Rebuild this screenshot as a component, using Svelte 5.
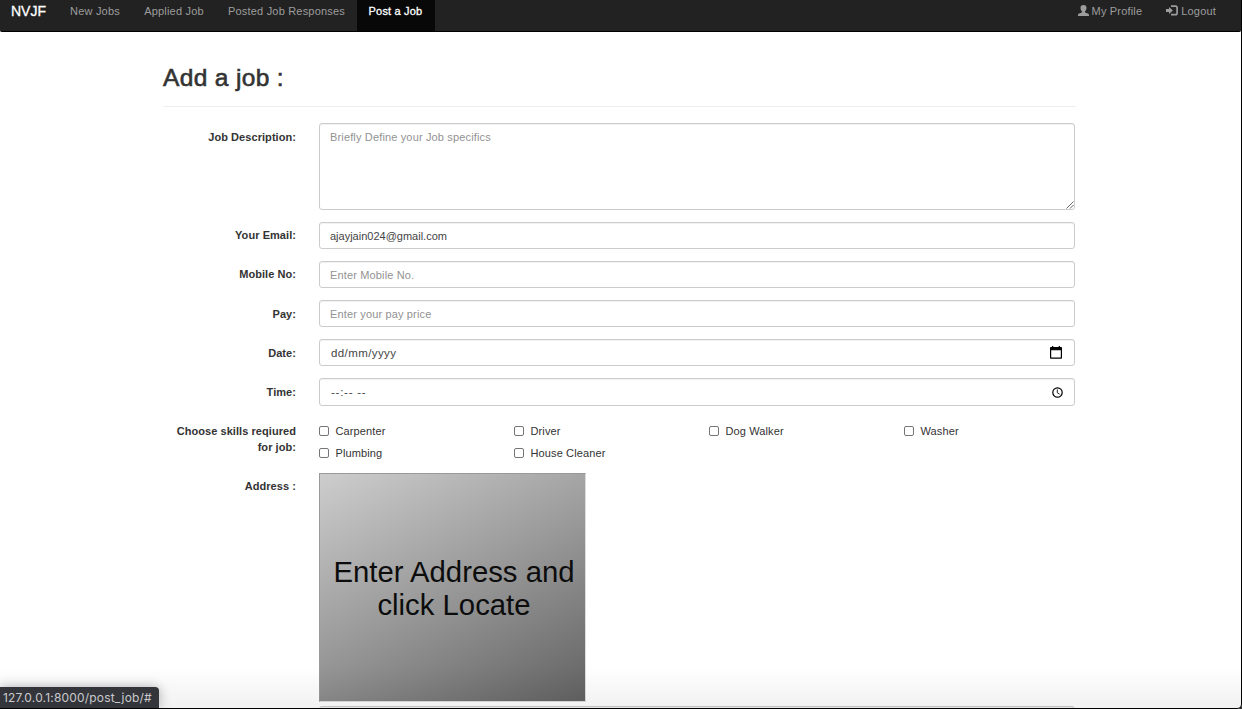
<script>
  const links = [
    { text: 'New Jobs', width: 74 },
    { text: 'Applied Job', width: 84 },
    { text: 'Posted Job Responses', width: 141 },
    { text: 'Post a Job', width: 78, active: true }
  ];
  const skills = ['Carpenter', 'Driver', 'Dog Walker', 'Washer', 'Plumbing', 'House Cleaner'];
</script>

<div class="screen">
  <nav>
    <a class="brand" href="#top">NVJF</a>
    {#each links as link}
      <a class="link" class:active={link.active} href="#top" style="width: {link.width}px">{link.text}</a>
    {/each}
    <div class="right">
      <a class="profile" href="#top">
        <svg width="11" height="11" viewBox="0 0 11 11"><path fill="currentColor" d="M5.500 0C3.400 0 2.400 1.100 2.500 2.900c.1 1.600.6 2.700 1.500 3.400v.8c0 .4-.3.500-.7.700L1.200 8.600C.3 9 0 9.400 0 10.200V11h11v-.8c0-.8-.3-1.200-1.200-1.600L7.700 7.800c-.4-.2-.7-.3-.7-.7v-.8c.9-.7 1.400-1.800 1.500-3.400C8.600 1.100 7.600 0 5.500 0z" /></svg>
        <span>My Profile</span>
      </a>
      <a class="logout" href="#top">
        <svg width="12" height="11" viewBox="0 0 12 11"><path fill="currentColor" d="M0 4h3V1.900L6.900 5.500 3 9.100V7H0z" /><path fill="none" stroke="currentColor" stroke-width="1.700" d="M5 1.100h4.400q1.700 0 1.700 1.700v5.200q0 1.700-1.700 1.700H5" /></svg>
        <span>Logout</span>
      </a>
    </div>
  </nav>

  <main>
    <h2>Add a job :</h2>
    <form>
      <div class="row tall">
        <label for="desc">Job Description:</label>
        <div class="area">
          <textarea id="desc" placeholder="Briefly Define your Job specifics"></textarea>
          <svg class="grip" width="8" height="8" viewBox="0 0 8 8"><path d="M.5 7.500l7-7M4 7.500L7.500 4" stroke="#555" stroke-width=".9" /></svg>
        </div>
      </div>
      <div class="row">
        <label for="email">Your Email:</label>
        <input class="control" id="email" type="text" value="ajayjain024@gmail.com" />
      </div>
      <div class="row">
        <label for="mobile">Mobile No:</label>
        <input class="control" id="mobile" type="text" placeholder="Enter Mobile No." />
      </div>
      <div class="row low">
        <label for="pay">Pay:</label>
        <input class="control" id="pay" type="text" placeholder="Enter your pay price" />
      </div>
      <div class="row low">
        <span class="label">Date:</span>
        <div class="control picker">
          <span class="date">dd/mm/yyyy</span>
          <svg width="12" height="13" viewBox="0 0 12 13"><path fill="#000" fill-rule="evenodd" d="M2 0h1.300v1h5.400V0H10v1h1.200q.8 0 .8.800V12q0 .8-.8.800H.8Q0 12.800 0 12V1.800Q0 1 .8 1H2zM1.200 4.200v7.400h9.600V4.200z" /></svg>
        </div>
      </div>
      <div class="row low time-row">
        <span class="label">Time:</span>
        <div class="control picker">
          <span class="time">--:-- --</span>
          <svg width="11" height="11" viewBox="0 0 11 11" fill="none" stroke="#000"><circle cx="5.500" cy="5.500" r="4.700" stroke-width="1.200" /><path d="M5.300 2.500v3.200l2.300 1.500" stroke-width=".9" /></svg>
        </div>
      </div>
      <div class="row low skills-row">
        <span class="label">Choose skills reqiured<br />for job:</span>
        <div class="skills">
          {#each skills as skill}
            <label class="skill"><input type="checkbox" />{skill}</label>
          {/each}
        </div>
      </div>
      <div class="row address-row">
        <span class="label">Address :</span>
        <div class="address">
          <div class="map"><span>Enter Address and</span><span>click Locate</span></div>
          <input class="control next" type="text" aria-label="Address" />
        </div>
      </div>
    </form>
  </main>

  <div class="fade"></div>
  <div class="status">127.0.0.1:8000/post_job/#</div>
  <div class="frame"></div>
</div>

<style>
  :global(body) { margin: 0; background: #000; overflow: hidden; }
  * { box-sizing: border-box; }
  .screen {
    position: relative;
    width: 1242px;
    height: 709px;
    overflow: hidden;
    background: #fff;
    color: #333;
    font: 11px/16px "Liberation Sans", Arial, sans-serif;
  }
  nav {
    display: flex;
    width: 1241px;
    height: 32px;
    background: #222;
    border-bottom: 1px solid #000;
    border-radius: 0 0 2px 2px;
  }
  nav a { color: #9d9d9d; text-decoration: none; line-height: 16px; padding-top: 3px; white-space: nowrap; }
  .brand { width: 58px; padding-left: 11px; color: #fff; font-size: 14px; -webkit-text-stroke: .3px #fff; }
  .link { text-align: center; letter-spacing: .19px; }
  .link.active { background: #080808; color: #fff; padding-right: 1px; -webkit-text-stroke: .3px #fff; }
  .right { display: flex; margin-left: auto; padding-right: 25px; gap: 24px; letter-spacing: .18px; }
  .right a { display: flex; }
  .right svg { margin-top: 2px; }
  .profile { gap: 3px; }
  .logout { gap: 3px; }
  main { width: 913px; margin-left: 163px; }
  h2 {
    margin: 0 0 16px;
    height: 75px;
    padding-top: 31px;
    border-bottom: 1px solid #eee;
    font-size: 24.500px;
    line-height: 30px;
    font-weight: 400;
    letter-spacing: .35px;
    -webkit-text-stroke: .6px #333;
  }
  .row { display: grid; grid-template-columns: 133px 756px; column-gap: 23px; height: 39px; align-items: start; }
  .row > label, .label { font-weight: 700; text-align: right; padding-top: 5px; letter-spacing: .06px; white-space: nowrap; }
  .low > label, .low > .label { padding-top: 6px; }
  .tall { height: 99px; }
  .tall > label { padding-top: 6px; }
  .area { position: relative; height: 87px; }
  textarea, .control {
    display: block;
    width: 100%;
    margin: 0;
    border: 1px solid #ccc;
    border-radius: 3px;
    background: #fff;
    box-shadow: inset 0 1px 1px rgba(0, 0, 0, .06);
    color: #444;
    font: inherit;
    outline: 0;
    padding: 0 10px;
  }
  textarea { height: 87px; padding-top: 5px; resize: none; }
  .control { height: 27px; }
  ::placeholder { color: #929292; opacity: 1; letter-spacing: .15px; }
  .grip { position: absolute; right: 1px; bottom: 1px; }
  .picker { display: flex; align-items: center; justify-content: space-between; padding: 0 12px 0 11px; }
  .date { font-size: 11.500px; letter-spacing: .4px; }
  .time { font-size: 11.500px; letter-spacing: .75px; }
  .time-row .picker { height: 28px; padding-right: 11px; }
  .skills-row { height: 56px; }
  .skills { display: grid; grid-template-columns: repeat(4, 195px); padding-top: 3px; grid-auto-rows: 22px; width: 756px; }
  .skill { display: flex; align-items: center; gap: 6.500px; letter-spacing: .12px; white-space: nowrap; }
  .skill input { appearance: none; width: 10px; height: 10px; margin: 0; border: 1px solid #767676; border-radius: 2px; background: #fff; }
  .map {
    display: flex;
    flex-direction: column;
    align-items: center;
    justify-content: center;
    width: 267px;
    height: 229px;
    padding: 0 0 0 3px;
    border: 1px solid #999;
    border-right-color: #ddd;
    border-bottom-color: #ddd;
    background: linear-gradient(152deg, #cdcdcd, #999 50%, #626262);
    color: #0c0c0c;
    font-size: 29.300px;
    line-height: 33px;
    white-space: nowrap;
  }
  .next { margin-top: 4px; }
  .fade { position: absolute; left: 0; right: 0; bottom: 1px; height: 42px; background: linear-gradient(transparent, rgba(0, 0, 0, .055)); }
  .status {
    position: absolute;
    left: 0;
    bottom: 1px;
    width: 159px;
    height: 21px;
    padding-left: 3px;
    border-radius: 0 4px 0 0;
    background: #34353a;
    box-shadow: 0 0 12px rgba(0, 0, 0, .3);
    color: #c9cacd;
    font: 12px/21px Inter, sans-serif;
    letter-spacing: .18px;
    white-space: nowrap;
  }
  .frame { position: absolute; inset: 0; border-right: 1px solid #000; border-bottom: 1px solid #000; border-bottom-right-radius: 5px; box-shadow: 0 0 0 5px #333; pointer-events: none; }
</style>
